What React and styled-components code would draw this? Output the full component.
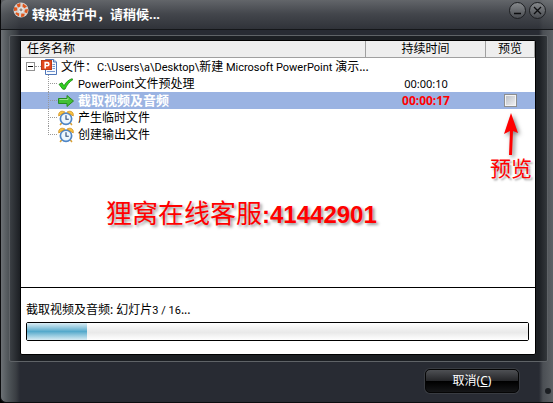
import React, { useState } from "react";
import styled, { createGlobalStyle } from "styled-components";

const UI_FONT = `"Noto Sans", "Noto Sans CJK SC", sans-serif`;

// STYLING
const GlobalStyle = createGlobalStyle`
  * {
    box-sizing: border-box;
  }

  body {
    margin: 0;
    background: #000;
    font-family: ${UI_FONT};
    font-size: 12px;
    line-height: 16px;
    color: #000;
  }

  svg {
    flex-shrink: 0;
  }
`;

const Window = styled.div`
  position: relative;
  display: flex;
  flex-direction: column;
  min-height: 100vh;
  border: 1px solid #0c0d0f;
  border-top: 0;
  border-right: 0;
  border-radius: 6px 0 0 6px;
  background:
    linear-gradient(90deg, #6c7175 0, #50565a 7px, #3a3e43 15px, transparent 19px),
    linear-gradient(270deg, #5d6165 0, #4b4f54 10px, transparent 14px),
    #282b33;
`;

const TitleBar = styled.header`
  display: flex;
  align-items: flex-start;
  height: 30px;
  padding: 2px 7px 0 12px;
  border-bottom: 1px solid #15171a;
  background: linear-gradient(
    180deg,
    rgba(118, 121, 124, 0.75),
    rgba(76, 79, 84, 0.75) 14px,
    rgba(50, 53, 59, 0.75)
  );
`;

const Title = styled.h1`
  flex: 1;
  margin: 4px 0 0 3px;
  font-size: 13px;
  line-height: 16px;
  font-weight: 700;
  color: #fff;
`;

const WindowButton = styled.button`
  width: 17px;
  height: 17px;
  margin-left: 3px;
  padding: 0;
  border: 1px solid #1d1f22;
  border-radius: 50%;
  background: linear-gradient(#85888b, #4a4d52);
  display: flex;
  align-items: center;
  justify-content: center;
`;

const Frame = styled.main`
  display: flex;
  flex: 1;
  margin: 5px 5px 0 8px;
  padding: 4px 11px 6px 10px;
  border: 1px solid #5f6367;
  border-radius: 2px;
  background: linear-gradient(90deg, #3b3f44, #1c1f23 10px, #1c1f23 calc(100% - 8px), #33373b);
`;

const Panel = styled.section`
  position: relative;
  display: flex;
  flex: 1;
  flex-direction: column;
  min-width: 0;
  border: 1px solid #000;
  border-radius: 2px;
  background: #fff;
`;

const TaskList = styled.div`
  flex: 1;
  border-bottom: 1px solid #000;
`;

const Table = styled.table`
  width: 100%;
  table-layout: fixed;
  border-collapse: separate;
  border-spacing: 0;
`;

const HeadCell = styled.th`
  width: ${(props) => props.$width || "auto"};
  height: 17px;
  padding: 0 6px;
  border-bottom: 1px solid #a0a0a0;
  border-right: 1px solid #a0a0a0;
  background: #eee;
  font-weight: 400;
  line-height: 16px;
  text-align: ${(props) => props.$align || "left"};
`;

const Row = styled.tr`
  height: 17px;
  background: ${(props) => (props.$active ? "#9ab3e2" : "transparent")};
`;

const Cell = styled.td`
  height: 17px;
  padding: 0;
  text-align: center;
  line-height: 17px;
  font-weight: ${(props) => (props.$active ? 700 : 400)};
  color: ${(props) => (props.$active ? "#f00" : "#000")};
`;

const TreeItem = styled.div`
  display: flex;
  align-items: center;
  height: 17px;
  padding-left: ${(props) => (props.$root ? 5 : 27)}px;
  white-space: nowrap;
  text-align: left;
  color: ${(props) => (props.$active ? "#fff" : "#000")};
  font-size: ${(props) => (props.$active ? 13 : 12)}px;
`;

const Expander = styled.button`
  flex-shrink: 0;
  width: 9px;
  height: 9px;
  padding: 0;
  border: 1px solid #919191;
  background: linear-gradient(#000, #000) center / 5px 1px no-repeat #fff;
`;

const RootLine = styled.span`
  flex-shrink: 0;
  width: 6px;
  border-top: 1px dotted #999;
`;

const Branch = styled.span`
  flex-shrink: 0;
  align-self: stretch;
  width: 10px;
  background: linear-gradient(90deg, #999 1px, transparent 1px) 0 8px / 2px 1px repeat-x;

  &::before {
    content: "";
    display: block;
    height: ${(props) => (props.$last ? "9px" : "100%")};
    border-left: 1px dotted #999;
  }
`;

const Label = styled.span`
  margin-left: 4px;
`;

const Latin = styled.span`
  font-family: Roboto, sans-serif;
  font-size: 11px;
`;

const Time = styled.span`
  font-size: ${(props) => (props.$active ? 12 : 11)}px;
`;

const PreviewBox = styled.input`
  appearance: none;
  display: block;
  width: 13px;
  height: 13px;
  margin: 0 auto;
  border: 1px solid #8e8f8f;
  outline: 1px solid #f4f4f4;
  outline-offset: -2px;
  background: linear-gradient(135deg, #b9bdc4, #f2f3f5);

  &:checked {
    background: #4a6fb5;
  }
`;

const Watermark = styled.p`
  position: absolute;
  top: 158px;
  left: 85px;
  margin: 0;
  font-family: "Liberation Sans", "Noto Sans CJK SC", sans-serif;
  font-size: 26px;
  font-weight: 400;
  line-height: 30px;
  color: #f00;
  text-shadow: 2px 2px 3px rgba(0, 0, 0, 0.4);
  white-space: nowrap;
`;

const WatermarkNumber = styled.strong`
  font-size: 24px;
`;

const Callout = styled.div`
  position: absolute;
  top: 72px;
  right: 3px;
  display: flex;
  flex-direction: column;
  align-items: center;
  font-size: 21px;
  font-weight: 400;
  line-height: 24px;
  color: #f00;
  text-shadow: 2px 2px 2px rgba(0, 0, 0, 0.35);

  svg {
    filter: drop-shadow(2px 2px 2px rgba(0, 0, 0, 0.5));
  }
`;

const Status = styled.div`
  display: flex;
  flex-direction: column;
  padding: 14px 6px 13px 5px;
`;

const StatusLabel = styled.label`
  margin-bottom: 3px;
`;

const ProgressBar = styled.progress`
  appearance: none;
  display: block;
  width: 100%;
  height: 19px;
  padding: 0;
  border: 1px solid #000;
  border-radius: 2px;
  background: #fff;

  &::-webkit-progress-bar {
    background: linear-gradient(#fff, #f2f2f2 30%, #e9e9e9 55%, #fff);
  }

  &::-webkit-progress-value {
    background: linear-gradient(#dceef5, #8cc5dc 30%, #55a9cb 50%, #8cc5dc 70%, #d8ecf4);
  }
`;

const Footer = styled.footer`
  display: flex;
  justify-content: flex-end;
  padding: 7px 34px 9px;
`;

const CancelButton = styled.button`
  width: 94px;
  height: 24px;
  padding: 0;
  border: 1px solid #050505;
  border-radius: 5px;
  background: linear-gradient(#4e5054, #26272a 48%, #000 52%, #151618);
  box-shadow: 0 0 0 1px #393c42;
  font-family: ${UI_FONT};
  font-size: 12px;
  line-height: 16px;
  color: #fff;
`;

const Grip = styled.span`
  position: absolute;
  right: 2px;
  bottom: 8px;
  width: 6px;
  height: 6px;
  border-radius: 50%;
  background: #1b1e22;
`;

// ICONS
function AppIcon() {
  return (
    <svg width="16" height="16" viewBox="0 0 16 16" aria-hidden="true">
      <circle cx="8" cy="8" r="7.5" fill="#d6d3d0" />
      <g fill="#e0561c">
        <path d="M3.6 2.6L7.4 1v3.600L5 5.400z" />
        <path d="M10 1.500l4 3-2.600 1.700-2-1.800z" />
        <path d="M12 7.600l3-.6-.8 4.200-2.800-1z" />
        <path d="M8.300 11.400l3.500.3-.8 2.700-3 .5z" />
        <path d="M3.200 10.300l3.100 1.100-.5 3-3.400-2.600z" />
        <path d="M1 5.200l3.200.2.100 3-3.300.5z" />
      </g>
      <path d="M8 5.200L10.600 7l-1 3.200H6.400l-1-3.200z" fill="#f6f5f4" />
      <circle cx="8" cy="7.800" r="1.600" fill="#96877d" />
    </svg>
  );
}

function PowerPointIcon() {
  return (
    <svg width="16" height="16" viewBox="0 0 16 16" aria-hidden="true">
      <path d="M4.500.5h8l3 2.500v12.500h-11z" fill="#f7fafe" stroke="#4f76b8" />
      <path d="M12.500.5V3h3" fill="#c8d9f2" stroke="#4f76b8" />
      <path d="M11.500 5.500H14M11.500 7.500H14M11.500 9.500H14M6 12.500h8" stroke="#7396cf" />
      <rect x="0.5" y="1.5" width="10" height="9" fill="#e2481c" stroke="#bd3b17" />
      <path d="M4.200 9.500V3.600h2.100a1.600 1.600 0 010 3.200H4.200" fill="none" stroke="#fff" strokeWidth="1.600" />
    </svg>
  );
}

function CheckIcon() {
  return (
    <svg width="16" height="16" viewBox="0 0 16 16" aria-hidden="true">
      <path
        d="M1 8.300l3-1.500 2 3C8 6 10.600 3.800 14 2.700l1 .8C11.600 5.800 8.900 8.700 7 13.200H4.800z"
        fill="#2fd01f"
        stroke="#16820f"
        strokeWidth="0.8"
      />
    </svg>
  );
}

function ArrowIcon() {
  return (
    <svg width="16" height="16" viewBox="0 0 16 16" aria-hidden="true">
      <path
        d="M.5 5.500h8.500v-3L15.500 8 9 13.500v-3H.5z"
        fill="#43c035"
        stroke="#258a21"
      />
      <path d="M1.500 6.500h8.500V4.700" fill="none" stroke="#95e087" />
    </svg>
  );
}

function ClockIcon() {
  return (
    <svg width="16" height="16" viewBox="0 0 17 17" aria-hidden="true">
      <path d="M4 13.500L2.200 16M13 13.500l1.800 2.500" stroke="#d9a035" strokeWidth="1.6" />
      <circle cx="8.5" cy="9.300" r="6" fill="#eef7fd" stroke="#4f86c6" strokeWidth="1.800" />
      <path d="M.8 6.300C0 2 4 0 7.300 2.200z" fill="#f9c544" stroke="#c98613" strokeWidth="0.8" />
      <path d="M16.200 6.300C17 2 13 0 9.700 2.200z" fill="#f9c544" stroke="#c98613" strokeWidth="0.8" />
      <path d="M8.500 5.500v4.300h3" fill="none" stroke="#2b4a75" strokeWidth="1.200" />
    </svg>
  );
}

const icons = {
  done: CheckIcon,
  running: ArrowIcon,
  waiting: ClockIcon,
};

const tasks = [
  { prefix: "PowerPoint", name: "文件预处理", state: "done", time: "00:00:10" },
  { name: "截取视频及音频", state: "running", time: "00:00:17" },
  { name: "产生临时文件", state: "waiting" },
  { name: "创建输出文件", state: "waiting" },
];

function TaskRow({ task, last, preview, onPreview }) {
  const Icon = icons[task.state];
  const active = task.state === "running";

  return (
    <Row $active={active}>
      <Cell $active={active}>
        <TreeItem $active={active}>
          <Branch $last={last} />
          <Icon />
          <Label>
            {task.prefix && <Latin>{task.prefix}</Latin>}
            {task.name}
          </Label>
        </TreeItem>
      </Cell>
      <Cell $active={active}>
        <Time $active={active}>{task.time}</Time>
      </Cell>
      <Cell>
        {active && (
          <PreviewBox
            type="checkbox"
            aria-label="预览"
            checked={preview}
            onChange={(e) => onPreview(e.target.checked)}
          />
        )}
      </Cell>
    </Row>
  );
}

function App() {
  const [preview, setPreview] = useState(false);
  const [open, setOpen] = useState(true);

  return (
    <Window>
      <GlobalStyle />
      <TitleBar>
        <AppIcon />
        <Title>转换进行中，请稍候...</Title>
        <WindowButton type="button" aria-label="最小化">
          <svg width="9" height="9" viewBox="0 0 9 9">
            <path d="M1 7.500h7" stroke="#0c0d0f" strokeWidth="1.500" />
          </svg>
        </WindowButton>
        <WindowButton type="button" aria-label="关闭">
          <svg width="9" height="9" viewBox="0 0 9 9">
            <path d="M1 1l7 7M8 1L1 8" stroke="#0c0d0f" strokeWidth="1.300" />
          </svg>
        </WindowButton>
      </TitleBar>

      <Frame>
        <Panel>
          <TaskList>
            <Table>
              <thead>
                <tr>
                  <HeadCell>任务名称</HeadCell>
                  <HeadCell $width="120px" $align="center">持续时间</HeadCell>
                  <HeadCell $width="49px" $align="center">预览</HeadCell>
                </tr>
              </thead>
              <tbody>
                <Row>
                  <Cell>
                    <TreeItem $root>
                      <Expander type="button" aria-label="文件" aria-expanded={open} onClick={() => setOpen(!open)} />
                      <RootLine />
                      <PowerPointIcon />
                      <Label>
                        文件：<Latin>C:\Users\a\Desktop\</Latin>新建<Latin> Microsoft PowerPoint </Latin>演示...
                      </Label>
                    </TreeItem>
                  </Cell>
                  <Cell />
                  <Cell />
                </Row>
                {open &&
                  tasks.map((task, i) => (
                    <TaskRow
                      key={task.name}
                      task={task}
                      last={i === tasks.length - 1}
                      preview={preview}
                      onPreview={setPreview}
                    />
                  ))}
              </tbody>
            </Table>
          </TaskList>

          <Status>
            <StatusLabel htmlFor="progress">
              截取视频及音频: 幻灯片<Latin>3 / 16</Latin>...
            </StatusLabel>
            <ProgressBar id="progress" max="100" value="12" />
          </Status>

          <Watermark>
            狸窝在线客服<WatermarkNumber>:41442901</WatermarkNumber>
          </Watermark>
          <Callout>
            <svg width="16" height="43" viewBox="0 0 16 43" aria-hidden="true">
              <path d="M8 0l7 20-5-2-1 24H6l1-24-6 3z" fill="#f00" />
            </svg>
            预览
          </Callout>
        </Panel>
      </Frame>

      <Footer>
        <CancelButton type="button">
          取消(<u>C</u>)
        </CancelButton>
      </Footer>
      <Grip />
    </Window>
  );
}

export default App;
